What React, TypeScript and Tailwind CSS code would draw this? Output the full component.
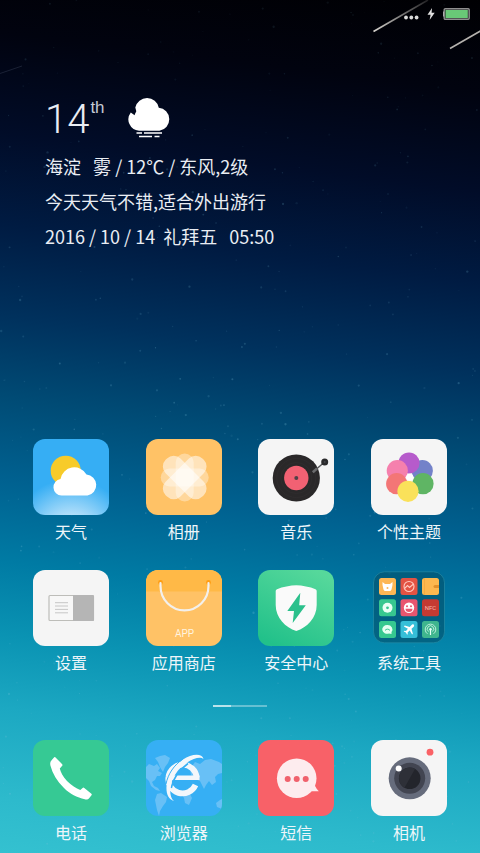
import React from 'react';

const sceneStars = (() => {
  let seed = 20161014;
  const next = () => {
    seed = (seed * 1664525 + 1013904223) % 4294967296;
    return seed / 4294967296;
  };
  return Array.from({ length: 420 }, () => {
    const x = next() * 480;
    const y = next() * 853;
    // stars get fainter towards the dark top of the sky
    const fade = Math.min(1, 0.4 + y / 600);
    return { x, y, r: 0.5 + next() * 0.7, o: (0.06 + next() * 0.2) * fade };
  });
})();

const Wallpaper = () => (
  <svg
    className="absolute inset-0 w-full h-full"
    viewBox="0 0 480 853"
    preserveAspectRatio="xMidYMin slice"
    aria-hidden="true"
  >
    <defs>
      <linearGradient id="meteor" x1="0" y1="1" x2="1" y2="0">
        <stop offset="0" stopColor="#d8d5cf" />
        <stop offset="1" stopColor="#d8d5cf" stopOpacity="0.15" />
      </linearGradient>
    </defs>
    {sceneStars.map((star, index) => (
      <circle key={index} cx={star.x} cy={star.y} r={star.r} fill="#7cc4dc" opacity={star.o} />
    ))}
    <path d="M373.5 31.5L428 0" stroke="url(#meteor)" strokeWidth="1.6" />
    <path d="M450 48.5L484 29" stroke="#b5b2ae" strokeWidth="1.6" />
    <path d="M0 73.500L22 66" stroke="#7c8aa5" strokeWidth="1" opacity="0.2" />
  </svg>
);

const FogIcon = () => (
  <svg className="w-11 h-[42px]" viewBox="0 0 44 42" aria-label="雾" role="img">
    <path
      d="M3.800 16.500L7.600 19.300C8 17.500 9 16 9.300 15.200L8.300 11.500A12 12 0 0 1 31.800 11.700A11.600 11.600 0 0 1 32.500 34.700H12A11.300 11.300 0 0 1 3.800 16.500Z"
      fill="#fff"
    />
    <path d="M9.500 37H15M17 37H35M12 40.500H25M27.500 40.500H32.500" stroke="#fff" strokeWidth="1.700" />
  </svg>
);

const WeatherIcon = () => (
  <svg viewBox="0 0 76 76">
    <defs>
      <radialGradient id="sky" gradientUnits="userSpaceOnUse" cx="38" cy="100" r="60">
        <stop offset="0" stopColor="#cdeafc" />
        <stop offset="0.4" stopColor="#b2dffa" />
        <stop offset="1" stopColor="#36aef4" />
      </radialGradient>
    </defs>
    <rect width="76" height="76" fill="url(#sky)" />
    <circle cx="32.700" cy="31.700" r="15" fill="#f7cb2a" />
    <path
      d="M28.500 56.500A8.300 8.300 0 0 1 27.500 40A14 14 0 0 1 53.500 35.500A10.600 10.600 0 0 1 54.500 56.500Z"
      fill="#fff"
    />
  </svg>
);

const AlbumIcon = () => (
  <svg viewBox="0 0 76 76">
    <rect width="76" height="76" fill="#ffc266" />
    <g fill="#fff">
      <rect x="29.700" y="14.500" width="18" height="48" rx="9" opacity="0.35" />
      <rect x="14.700" y="29.500" width="48" height="18" rx="9" opacity="0.35" />
      <rect x="12.700" y="28" width="52" height="21" rx="9.500" opacity="0.55" transform="rotate(45 38.700 38.500)" />
      <rect x="12.700" y="28" width="52" height="21" rx="9.500" opacity="0.55" transform="rotate(-45 38.700 38.500)" />
    </g>
  </svg>
);

const MusicIcon = () => (
  <svg viewBox="0 0 76 76">
    <rect width="76" height="76" fill="#f5f5f5" />
    <circle cx="38.300" cy="39" r="23.600" fill="#2a2829" />
    <circle cx="38.300" cy="39" r="19.500" fill="none" stroke="#302e2f" strokeWidth="0.700" />
    <circle cx="38.300" cy="39" r="15.500" fill="none" stroke="#302e2f" strokeWidth="0.700" />
    <circle cx="38.300" cy="39" r="12.200" fill="#f26173" />
    <circle cx="38.300" cy="39" r="2" fill="#4f4248" />
    <path d="M55 33L66 23.500" stroke="#58585a" strokeWidth="1.500" />
    <path d="M54.800 33.200L59 29.600" stroke="#6a6a6c" strokeWidth="2.600" />
    <circle cx="66.700" cy="23" r="3.500" fill="#2a2a2c" />
    <circle cx="66.700" cy="23" r="1" fill="#45464a" />
  </svg>
);

const ThemeIcon = () => (
  <svg viewBox="0 0 76 76">
    <rect width="76" height="76" fill="#f5f5f5" />
    <circle cx="51.300" cy="31.700" r="10.600" fill="#7382c9" />
    <circle cx="52" cy="44.700" r="10.600" fill="#5fb564" />
    <circle cx="38" cy="24" r="10.600" fill="#b65bcb" />
    <circle cx="26.300" cy="31.700" r="10.600" fill="#f580ad" />
    <circle cx="25.700" cy="44.700" r="10.600" fill="#f37676" />
    <circle cx="37" cy="52.300" r="10.600" fill="#fae15a" />
    <circle cx="38.700" cy="38.300" r="3.500" fill="#fff" />
  </svg>
);

const SettingsIcon = () => (
  <svg viewBox="0 0 76 76">
    <rect width="76" height="76" fill="#f5f5f5" />
    <rect x="16" y="25.500" width="44.500" height="25" rx="1" fill="#f7f7f7" stroke="#bdbdb9" strokeWidth="1.200" />
    <path d="M40 25H59.500A1.300 1.300 0 0 1 61 26.500V49.500A1.300 1.300 0 0 1 59.500 51H40Z" fill="#b5b5b5" />
    <path d="M22 32.700H35M22 36H35M22 39.400H35M22 42.800H35" stroke="#c6c6c6" strokeWidth="1" />
  </svg>
);

const StoreIcon = () => (
  <svg viewBox="0 0 76 76">
    <rect width="76" height="76" fill="#ffc266" />
    <rect width="76" height="21.500" fill="#ffb947" />
    <circle cx="14.500" cy="12.500" r="2.400" fill="#ff9d12" />
    <circle cx="62.500" cy="12.500" r="2.400" fill="#ff9d12" />
    <path d="M14.500 13V16A24 24.400 0 0 0 62.500 16V13" fill="none" stroke="#f3f0ec" strokeWidth="2.200" strokeLinecap="round" />
    <text x="38.500" y="67" textAnchor="middle" fontSize="10" fontFamily="Roboto, sans-serif" fill="#fff3df">
      APP
    </text>
  </svg>
);

const SecurityIcon = () => (
  <svg viewBox="0 0 76 76">
    <defs>
      <linearGradient id="guard" x1="0.750" y1="0" x2="0.250" y2="1">
        <stop offset="0" stopColor="#56d89b" />
        <stop offset="1" stopColor="#22c18a" />
      </linearGradient>
    </defs>
    <rect width="76" height="76" fill="url(#guard)" />
    <path
      d="M38.300 15.300C44 15.300 52 17 57.500 19.200Q58.700 19.700 58.700 21V35C58.700 48 49 57.500 38.300 61C27.500 57.500 17.700 48 17.700 35V21Q17.700 19.700 19 19.200C24.500 17 32.500 15.300 38.300 15.300Z"
      fill="#fafafa"
    />
    <path d="M42.300 22.700L29.300 41H36L34.700 53L47.800 35.300H41.200Z" fill="#2bc08c" />
  </svg>
);

const ToolsIcon = () => (
  <svg viewBox="0 0 76 76">
    <rect x="2.500" y="1.800" width="71" height="71" rx="11" fill="#03536f" fillOpacity="0.650" stroke="#2b91a8" strokeOpacity="0.600" />
    <rect x="8" y="8" width="17" height="17" rx="2.500" fill="#fdb755" />
    <path d="M11.500 12L14 14H19L21.500 12V15L20.500 19.500Q20 21 18.500 21H14.500Q13 21 12.500 19.500L11.500 15Z" fill="#fff" />
    <circle cx="16.500" cy="18" r="1" fill="#fdb755" />

    <rect x="29.500" y="8" width="17" height="17" rx="2.500" fill="#e35343" />
    <circle cx="38" cy="16.500" r="5" fill="none" stroke="#ffc9bf" strokeWidth="1.100" />
    <path d="M33.500 18.500L36.500 15.500L38.500 17.500L42.500 14" fill="none" stroke="#ffc9bf" strokeWidth="1.100" />

    <rect x="51" y="8" width="17" height="17" rx="2.500" fill="#fdb84f" />
    <path d="M53.500 8V25" stroke="#f3a83d" strokeWidth="0.800" />
    <path d="M68 15H64A1.500 1.500 0 0 0 64 18H68Z" fill="#e1902b" />

    <rect x="8" y="29.300" width="17" height="17" rx="2.500" fill="#37c78f" />
    <circle cx="16.500" cy="37.800" r="5" fill="#e9fff5" />
    <circle cx="16.500" cy="37.800" r="1.400" fill="#37c78f" />

    <rect x="29.500" y="29.300" width="17" height="17" rx="2.500" fill="#e9566f" />
    <circle cx="38" cy="37.800" r="5.200" fill="#fff" />
    <circle cx="36" cy="36.300" r="1" fill="#e9566f" />
    <circle cx="40" cy="36.300" r="1" fill="#e9566f" />
    <path d="M34.500 38.800H41.500A3.500 3.200 0 0 1 34.500 38.800Z" fill="#e9566f" />

    <rect x="51" y="29.300" width="17" height="17" rx="2.500" fill="#c53a32" />
    <text x="59.500" y="40" textAnchor="middle" fontSize="6" fontFamily="Roboto, sans-serif" fill="#f5b6ac">
      NFC
    </text>

    <rect x="8" y="51" width="17" height="17" rx="2.500" fill="#36c890" />
    <path d="M16.500 55A5 4.400 0 0 1 20.500 62L20.500 64L18 63.500A5 4.400 0 1 1 16.500 55Z" fill="#e4fff3" />
    <path d="M14 60.500A3 3 0 0 1 19 60.500" fill="none" stroke="#36c890" strokeWidth="1" />

    <rect x="29.500" y="51" width="17" height="17" rx="2.500" fill="#35bfd8" />
    <path
      d="M42.800 54.700C42 54 41 54.500 40.300 55.300L38.700 57L33.700 55.600L32.900 56.400L36.900 58.800L35 60.900L33.400 60.700L32.700 61.400L34.900 62.600L36.100 64.800L36.800 64.100L36.600 62.500L38.700 60.600L41.100 64.600L41.900 63.800L40.500 58.800L42.200 57.200C43 56.500 43.500 55.500 42.800 54.700Z"
      fill="#fff"
    />

    <rect x="51" y="51" width="17" height="17" rx="2.500" fill="#3fb58e" />
    <g fill="none" stroke="#c9f3e2" strokeWidth="0.900">
      <path d="M56.500 63.800A5.300 5.300 0 1 1 62.500 63.800" />
      <path d="M57.500 61.500A3.200 3.200 0 1 1 61.500 61.500" />
    </g>
    <circle cx="59.500" cy="59.300" r="1.200" fill="#e8fff7" />
    <path d="M59.500 59.500V65" stroke="#e8fff7" strokeWidth="1.200" />
  </svg>
);

const PhoneIcon = () => (
  <svg viewBox="0 0 76 76">
    <rect width="76" height="76" fill="#36c994" />
    <path
      d="M22.300 17.200L29.200 24.200Q29.800 25 29.200 25.800L26.800 28.400C27.500 32 30 36.500 34 41C38.500 45.500 43 48.500 47.300 49.900L49.600 47.900Q50.400 47.300 51.300 47.900L58.400 53.700Q59.200 54.400 58.500 55.200L56.300 58C55.200 59.400 53.500 59.800 51.800 59.300C44 57.500 37 54 31 48C24 41 19.500 33.500 17.400 25.500C16.900 23 17.400 21.200 19 19.700L21.200 17.300Q21.800 16.700 22.300 17.200Z"
      fill="#fff"
    />
  </svg>
);

const BrowserIcon = () => (
  <svg viewBox="0 0 76 76">
    <rect width="76" height="76" fill="#36aff4" />
    <g fill="#68c0f6">
      <path d="M0 27L3 24L8 26L11 24L14 28L12 31L16 33L14 36L11 36L9 40L6 42L8 46L12 48L14 51L10 50L5 46L3 41L0 38Z" />
      <path d="M9 18L14 16L19 15L24 18L22 23L19 27L17 32L14 27L12 22Z" />
      <path d="M11 54L15 53L21 57L20 62L17 66L14 71L13 76L11 70L9 60Z" />
      <path d="M35 53L43 52L46 58L43 65L39 63L38 58Z" />
      <path d="M44 29L49 22L54 24L59 20L65 19L73 22L76 24V33L72 34L69 37L70 42L66 45L63 41L60 45L58 49L54 41L49 39L45 35Z" />
      <path d="M70 63L74 60L76 59V69L71 67Z" />
    </g>
    <path
      d="M49.500 45A14.200 14.200 0 0 1 22.500 37A14.200 14.200 0 0 1 50.700 37.500"
      fill="none"
      stroke="#f3f7fb"
      strokeWidth="5.800"
    />
    <path d="M26 37.800H53.500" stroke="#f3f7fb" strokeWidth="4.600" />
    <path d="M25.300 48C27 38.500 33 30 42 23.500" fill="none" stroke="#36aff4" strokeWidth="1.600" />
    <path
      d="M57.500 19C54.500 16.500 48 18 41 22.500C31.500 29 26 37.500 24.500 47C23.800 53 24.500 58 28 61C22.500 59.500 20 54 20.500 46.500C22 35 28 25.500 37 19.500C45 14 56 12.500 57.500 19Z"
      fill="#f3f7fb"
    />
    <path d="M20 44C22 34 28 25 37 19" fill="none" stroke="#36aff4" strokeWidth="1" />
  </svg>
);

const MessageIcon = () => (
  <svg viewBox="0 0 76 76">
    <rect width="76" height="76" fill="#f86168" />
    <circle cx="38.700" cy="38.300" r="19.800" fill="#fdecee" />
    <path d="M56.500 45Q58.500 49 60.800 51.300H48Z" fill="#fdecee" />
    <circle cx="29.700" cy="39" r="3" fill="#f0616c" />
    <circle cx="38.700" cy="39" r="3" fill="#f0616c" />
    <circle cx="47.700" cy="39" r="3" fill="#f0616c" />
  </svg>
);

const CameraIcon = () => (
  <svg viewBox="0 0 76 76">
    <rect width="76" height="76" fill="#f5f5f5" />
    <circle cx="38.700" cy="38.300" r="21" fill="#666c7c" />
    <circle cx="38.700" cy="38.300" r="15.500" fill="#424551" />
    <circle cx="38.700" cy="38.300" r="10.800" fill="#23252c" />
    <path d="M44 28.900A10.800 10.800 0 0 0 33.500 47.800Z" fill="#2e3038" />
    <circle cx="27.700" cy="28.500" r="3" fill="#fff" />
    <circle cx="59" cy="12.200" r="3.400" fill="#fa6266" />
  </svg>
);

const apps = [
  { name: '天气', icon: WeatherIcon },
  { name: '相册', icon: AlbumIcon },
  { name: '音乐', icon: MusicIcon },
  { name: '个性主题', icon: ThemeIcon },
  { name: '设置', icon: SettingsIcon },
  { name: '应用商店', icon: StoreIcon },
  { name: '安全中心', icon: SecurityIcon },
  { name: '系统工具', icon: ToolsIcon },
];

const dockApps = [
  { name: '电话', icon: PhoneIcon },
  { name: '浏览器', icon: BrowserIcon },
  { name: '短信', icon: MessageIcon },
  { name: '相机', icon: CameraIcon },
];

const AppGrid = ({ items }: { items: { name: string; icon: () => React.JSX.Element }[] }) => (
  <div className="grid grid-cols-[repeat(4,76px)] justify-between gap-y-[27px] px-[33px]">
    {items.map((item) => {
      const IconComponent = item.icon;
      return (
        <button key={item.name} type="button" className="flex flex-col items-center gap-1">
          <span className="block w-[76px] h-[76px] rounded-xl overflow-hidden">
            <IconComponent />
          </span>
          <span className="text-base leading-6 whitespace-nowrap text-[#eef6fa]">{item.name}</span>
        </button>
      );
    })}
  </div>
);

const StatusBar = () => (
  <header className="flex items-center justify-end gap-2 h-[27px] pr-[10px]">
    <svg className="w-4 h-3" viewBox="0 0 16 12" aria-hidden="true">
      <g fill="#dcdcdc">
        <circle cx="3" cy="9.500" r="1.900" />
        <circle cx="8.300" cy="9.500" r="1.900" />
        <circle cx="13.600" cy="9.500" r="1.900" />
      </g>
    </svg>
    <svg className="w-2 h-3" viewBox="0 0 8 12" aria-hidden="true">
      <path d="M5 0L0.500 6.700H3.600L2.600 12L7.700 4.800H4.600Z" fill="#e0e0e0" />
    </svg>
    <svg className="w-[27px] h-3" viewBox="0 0 27 12" role="img" aria-label="电池">
      <rect x="0" y="3.500" width="2" height="5" fill="#c9c9c9" />
      <rect x="1.200" y="0.700" width="25" height="10.600" rx="1" fill="#16181a" stroke="#8f8f8f" strokeWidth="1.400" />
      <rect x="2.500" y="2" width="22.300" height="8" fill="#69c877" />
    </svg>
  </header>
);

const WeatherWidget = () => (
  <section className="pt-[69px] pl-[45px] text-[#e9edf3]">
    <div className="flex items-start h-[53px]">
      <span className="font-['Roboto'] font-light text-[40px] leading-[48px]">14</span>
      <span className="pl-px font-['Liberation_Sans'] text-[17px] leading-6 text-[#c5cad4]">th</span>
      <span className="pl-[22px]">
        <FogIcon />
      </span>
    </div>
    <div className="text-lg leading-[35px] whitespace-pre">
      <p>海淀   雾 / 12℃ / 东风,2级</p>
      <p>今天天气不错,适合外出游行</p>
      <p>2016 / 10 / 14  礼拜五   05:50</p>
    </div>
  </section>
);

const App = () => {
  return (
    <div
      lang="zh-CN"
      className="relative min-h-screen overflow-hidden bg-[linear-gradient(187deg,#000003_0%,#01030f_10%,#010c28_21%,#001b42_31%,#00315d_41%,#004b75_50%,#006190_59%,#007ba4_68%,#0a93b3_76%,#1ca8c2_84%,#2dbacc_94%,#34c1d0_100%)] font-['Noto_Sans_CJK_SC',sans-serif]"
    >
      <Wallpaper />
      <div className="relative flex flex-col min-h-screen">
        <StatusBar />
        <WeatherWidget />

        <main className="mt-auto pt-10">
          <AppGrid items={apps} />
        </main>

        {/* Page indicator */}
        <div className="flex justify-center mt-[31px] mb-[33px]">
          <span className="w-[18px] h-0.5 bg-white/70" />
          <span className="w-9 h-0.5 bg-white/35" />
        </div>

        <nav className="pb-[9px]">
          <AppGrid items={dockApps} />
        </nav>
      </div>
    </div>
  );
};

export default App;
